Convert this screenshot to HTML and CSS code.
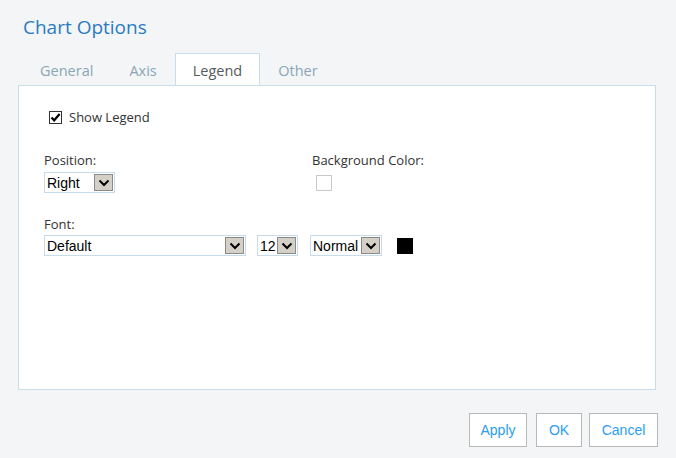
FILE: index.html
```html
<!DOCTYPE html>
<html>
<head>
<meta charset="utf-8">
<link rel="stylesheet" href="styles.css">
</head>
<body>
<div class="dialog">
  <h1 class="title">Chart Options</h1>
  <div class="tabs">
    <div class="tab">General</div>
    <div class="tab">Axis</div>
    <div class="tab active">Legend</div>
    <div class="tab">Other</div>
  </div>
  <div class="panel">
    <label class="check-row">
      <span class="checkbox"><svg width="11" height="11" viewBox="0 0 11 11"><path d="M1.5 5.5 L4.2 8.3 L9.6 2" fill="none" stroke="#000" stroke-width="2.2"/></svg></span>
      <span>Show Legend</span>
    </label>
    <div class="grid">
      <div class="field">
        <div class="label">Position:</div>
        <div class="sel w-pos"><span class="val">Right</span><span class="arrow"><svg width="12" height="8" viewBox="0 0 12 8"><path d="M1.5 1.5 L6 6 L10.5 1.5" fill="none" stroke="#000" stroke-width="2"/></svg></span></div>
      </div>
      <div class="field">
        <div class="label">Background Color:</div>
        <div class="swatch empty"></div>
      </div>
    </div>
    <div class="field font-field">
      <div class="label">Font:</div>
      <div class="font-row">
        <div class="sel w-font"><span class="val">Default</span><span class="arrow"><svg width="12" height="8" viewBox="0 0 12 8"><path d="M1.5 1.5 L6 6 L10.5 1.5" fill="none" stroke="#000" stroke-width="2"/></svg></span></div>
        <div class="sel w-size"><span class="val">12</span><span class="arrow"><svg width="12" height="8" viewBox="0 0 12 8"><path d="M1.5 1.5 L6 6 L10.5 1.5" fill="none" stroke="#000" stroke-width="2"/></svg></span></div>
        <div class="sel w-style"><span class="val">Normal</span><span class="arrow"><svg width="12" height="8" viewBox="0 0 12 8"><path d="M1.5 1.5 L6 6 L10.5 1.5" fill="none" stroke="#000" stroke-width="2"/></svg></span></div>
        <div class="swatch black"></div>
      </div>
    </div>
  </div>
  <div class="buttons">
    <button class="btn b-apply">Apply</button>
    <button class="btn b-ok">OK</button>
    <button class="btn b-cancel">Cancel</button>
  </div>
</div>
</body>
</html>
```
FILE: styles.css
```css
html, body {
  margin: 0;
  padding: 0;
}
body {
  background: #f3f5f7;
  font-family: "Open Sans", sans-serif;
  width: 676px;
  height: 458px;
  overflow: hidden;
}
.dialog {
  display: flex;
  flex-direction: column;
}
.title {
  margin: 0;
  padding: 14px 0 0 23px;
  font-size: 19px;
  font-weight: normal;
  line-height: 26px;
  color: #2b7bbf;
  height: 26px;
}
.tabs {
  display: flex;
  margin-top: 13px;
  padding-left: 22px;
  height: 32px;
}
.tab {
  padding: 3px 17px 0;
  height: 28px;
  line-height: 28px;
  font-size: 14.5px;
  color: #8ba6b6;
  border: 1px solid transparent;
  border-bottom: none;
}
.tab.active {
  background: #fff;
  border-color: #c9dcea;
  color: #555b60;
}
.panel {
  margin-left: 18px;
  height: 303px;
  border: 1px solid #c9dde9;
  background: #fff;
  padding-left: 25px;
  width: 611px;
}
.check-row {
  display: flex;
  align-items: center;
  margin-top: 22px;
  margin-left: 5px;
  height: 18px;
  font-size: 13px;
  color: #333;
}
.checkbox {
  width: 11px;
  height: 11px;
  border: 1px solid #333;
  margin-right: 7px;
  display: flex;
  background: #fff;
}
.grid {
  display: grid;
  grid-template-columns: 268px 1fr;
  margin-top: 25px;
}
.label {
  font-size: 13px;
  line-height: 18px;
  color: #333;
}
.sel {
  display: flex;
  align-items: center;
  height: 19px;
  border: 1px solid #c6dcec;
  background: #fff;
  font-family: "Liberation Sans", Arial, sans-serif;
  font-size: 14px;
  color: #000;
  padding-left: 2px;
  margin-top: 3px;
}
.val {
  flex: 1;
  line-height: 20px;
}
.arrow {
  width: 17px;
  height: 15px;
  background: #d4d0c8;
  border: 1px solid #8a8a8a;
  display: flex;
  align-items: center;
  justify-content: center;
  margin-right: 1px;
}
.w-pos { width: 67px; }
.w-font { width: 198px; }
.w-size { width: 37px; }
.w-style { width: 68px; }
.swatch {
  width: 16px;
  height: 16px;
  box-sizing: border-box;
}
.swatch.empty {
  border: 1px solid #c8c8c8;
  margin: 6px 0 0 4px;
  background: #fff;
}
.font-field {
  margin-top: 22px;
}
.font-field .sel {
  margin-top: 2px;
}
.font-row {
  display: flex;
  align-items: center;
}
.w-size { margin-left: 11px; }
.w-style { margin-left: 12px; }
.swatch.black {
  background: #000;
  margin-left: 15px;
  margin-top: 2px;
}
.buttons {
  display: flex;
  justify-content: flex-end;
  padding-right: 18px;
  margin-top: 23px;
}
.btn {
  height: 34px;
  border: 1px solid #b8b8b8;
  background: #fff;
  font-family: "Liberation Sans", Arial, sans-serif;
  font-size: 14px;
  color: #2a9df4;
  padding: 0;
  margin-left: 8px;
}
.b-apply { width: 58px; }
.b-ok { width: 46px; margin-left: 9px; }
.b-cancel { width: 69px; margin-left: 7px; }
```
